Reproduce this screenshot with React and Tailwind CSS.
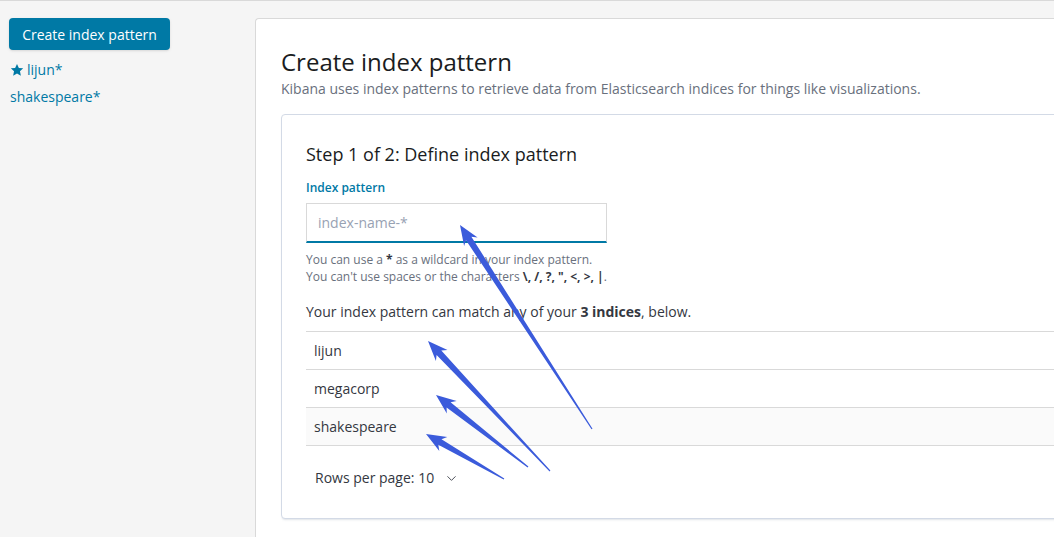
import { ChevronDown } from "lucide-react";

const arrows = [
  { tail: [592, 428], head: [460, 224] },
  { tail: [550, 470], head: [428, 340] },
  { tail: [528, 466], head: [436, 394] },
  { tail: [504, 478], head: [426, 433] },
];

function arrowPoints({ tail, head }) {
  const dx = head[0] - tail[0];
  const dy = head[1] - tail[1];
  const len = Math.hypot(dx, dy);
  const d = [dx / len, dy / len];
  const n = [-d[1], d[0]];
  const L = 18;
  const b = [head[0] - d[0] * L, head[1] - d[1] * L];
  const p = (base, nn, back = 0) => [base[0] + n[0] * nn - d[0] * back, base[1] + n[1] * nn - d[1] * back];
  const pts = [
    p(tail, 0.6),
    p(b, 3.2, -2),
    p(b, 8, 2),
    head,
    p(b, -8, 2),
    p(b, -3.2, -2),
    p(tail, -0.6),
  ];
  return pts.map((q) => q.map((v) => v.toFixed(1)).join(",")).join(" ");
}

const rows = ["lijun", "megacorp", "shakespeare"];

export default function App() {
  return (
    <div className="relative h-[537px] w-[1054px] overflow-hidden bg-[#f5f5f5] border-t border-[#d9d9d9] font-['Open_Sans',sans-serif] flex">
      {/* Sidebar */}
      <div className="w-[255px] shrink-0 pl-[9px] pt-[17px]">
        <button className="h-[32px] w-[161px] rounded bg-[#0079a5] text-white text-[14px] shadow-sm">
          Create index pattern
        </button>
        <div className="mt-[10px] flex flex-col gap-[7px] pl-[1px] text-[14px] leading-[20px] text-[#0079a5]">
          <div className="flex items-center gap-[3px]">
            <svg width="14" height="14" viewBox="0 0 24 24" fill="#0079a5">
              <path d="M12 1.5l3.2 6.9 7.4.8-5.5 5.1 1.5 7.4L12 18l-6.6 3.7 1.5-7.4-5.5-5.1 7.4-.8z" />
            </svg>
            <span>lijun*</span>
          </div>
          <div>shakespeare*</div>
        </div>
      </div>

      {/* Main panel */}
      <div className="mt-[17px] w-[1000px] shrink-0 rounded-tl bg-white border-l border-t border-[#d9d9d9] pl-[25px] pt-[27px]">
        <h1 className="text-[24px] leading-[32px] text-[#1a1c21]">Create index pattern</h1>
        <p className="mt-[1px] text-[14px] leading-[20px] text-[#69707d]">
          Kibana uses index patterns to retrieve data from Elasticsearch indices for things like visualizations.
        </p>

        <div className="mt-[15px] rounded border border-[#d3dae6] bg-white shadow-[0_2px_2px_-1px_rgba(152,162,179,0.3)] pl-[24px] pt-[27px] pb-[30px]">
          <h2 className="text-[18px] leading-[24px] text-[#1a1c21]">Step 1 of 2: Define index pattern</h2>

          <div className="mt-[14px] text-[12px] leading-[16px] font-semibold text-[#0079a5]">Index pattern</div>
          <div className="mt-[7px] w-[301px] h-[40px] border border-[#d9d9d9] border-b-2 border-b-[#0079a5] flex items-center px-[11px]">
            <span className="text-[14px] text-[#98a2b3]">index-name-*</span>
          </div>
          <div className="mt-[8px] text-[12px] leading-[17px] text-[#69707d]">
            <div>
              You can use a <b className="text-[#343741]">*</b> as a wildcard in your index pattern.
            </div>
            <div>
              You can't use spaces or the characters <b className="text-[#343741]">\, /, ?, ", &lt;, &gt;, |</b>.
            </div>
          </div>

          <p className="mt-[17px] text-[14px] leading-[20px] text-[#343741]">
            Your index pattern can match any of your <b className="font-bold">3 indices</b>, below.
          </p>

          <div className="mt-[9px] border-t border-[#d9d9d9]">
            {rows.map((r, i) => (
              <div
                key={r}
                className={`h-[38px] flex items-center pl-[8px] border-b border-[#d9d9d9] text-[14px] text-[#343741] ${i === 2 ? "bg-[#fafafa]" : ""}`}
              >
                {r}
              </div>
            ))}
          </div>

          <div className="mt-[22px] pl-[9px] flex items-center gap-[10px] text-[14px] leading-[20px] text-[#343741]">
            <span>Rows per page: 10</span>
            <ChevronDown size={15} strokeWidth={1.4} />
          </div>
        </div>
      </div>

      {/* annotation arrows */}
      <svg className="absolute inset-0 pointer-events-none" width="1054" height="537">
        {arrows.map((a, i) => (
          <polygon key={i} points={arrowPoints(a)} fill="#3b5bdb" />
        ))}
      </svg>
    </div>
  );
}
